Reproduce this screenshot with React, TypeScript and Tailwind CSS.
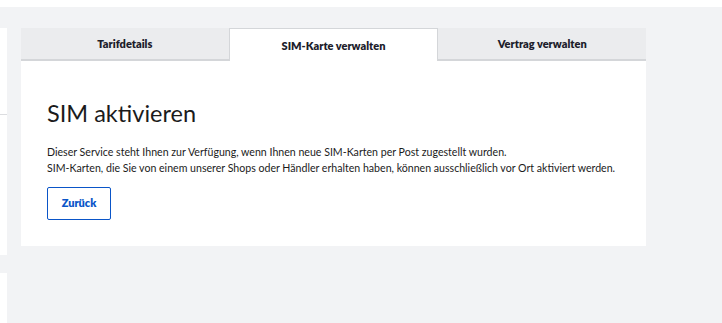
import React, { useState } from "react";

const tabs = ["Tarifdetails", "SIM-Karte verwalten", "Vertrag verwalten"];

const App = () => {
  const [active, setActive] = useState(1);

  return (
    <div className="w-[722px] h-[323px] overflow-hidden bg-[#f2f3f5] font-['Lato',sans-serif] text-[#1d1d2b]">
      <div className="h-[7px] bg-white" />
      <div className="flex">
        {/* side column, cut off at the left */}
        <div className="w-[7px] pt-[21px] flex flex-col">
          <div className="h-[227px] bg-white flex flex-col">
            <div className="h-[87px] border-b border-[#dcdde0]" />
          </div>
          <div className="h-[18px]" />
          <div className="h-[50px] bg-white" />
        </div>

        <div className="ml-[14px] pt-[21px] w-[625px]">
          <div className="flex h-[33px]">
            {tabs.map((t, i) => (
              <button
                key={t}
                onClick={() => setActive(i)}
                className={
                  i === active
                    ? "flex-1 bg-white border border-b-0 border-[#d4d6d9] text-[11px] font-extrabold pt-[2px]"
                    : "flex-1 bg-[#ebecee] border-b-2 border-[#d4d6d9] text-[11px] font-extrabold pt-[2px]"
                }
              >
                {t}
              </button>
            ))}
          </div>

          <div className="bg-white h-[185px] px-[26px] pt-[37px]">
            <h1 className="text-[23.5px] leading-[30px] font-normal text-[#1b1b1b]">SIM aktivieren</h1>
            <p className="mt-[16px] text-[10.6px] leading-[16px] text-[#1b1b1b] whitespace-nowrap">
              Dieser Service steht Ihnen zur Verfügung, wenn Ihnen neue SIM-Karten per Post zugestellt wurden.
              <br />
              SIM-Karten, die Sie von einem unserer Shops oder Händler erhalten haben, können ausschließlich vor Ort
              aktiviert werden.
            </p>
            <button className="mt-[11px] w-[64px] h-[33px] border border-[#0a55c8] rounded-[2px] text-[11px] font-extrabold text-[#0a55c8]">
              Zurück
            </button>
          </div>
        </div>
      </div>
    </div>
  );
};

export default App;
